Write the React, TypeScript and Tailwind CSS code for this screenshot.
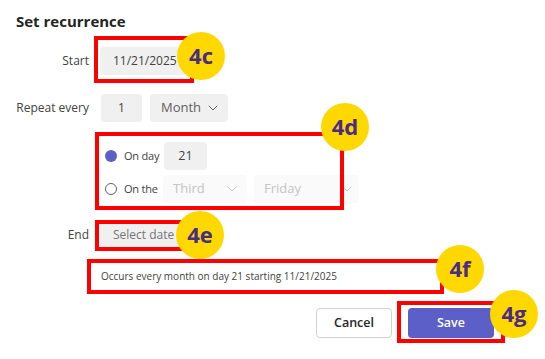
import React from "react"

const font = { fontFamily: '"Open Sans", "Noto Sans", sans-serif' }

function Chevron({ color = "#616161" }: { color?: string }) {
  return (
    <svg width="10" height="6" viewBox="0 0 10 6" fill="none" className="shrink-0">
      <path d="M1 1l4 4 4-4" stroke={color} strokeWidth="1" strokeLinecap="round" strokeLinejoin="round" />
    </svg>
  )
}

function Badge({ label, className }: { label: string; className: string }) {
  return (
    <div
      className={`absolute w-12 h-12 rounded-full bg-[#ffd800] flex items-center justify-center text-[22px] font-bold text-[#4b2c85] leading-none ${className}`}
    >
      <span className="-mt-[2px]">{label}</span>
    </div>
  )
}

export default function App() {
  return (
    <div className="relative w-[545px] h-[359px] bg-white overflow-hidden whitespace-nowrap" style={font}>
      <div className="pl-4 pt-[11px]">
        <h2 className="text-[15px] font-bold leading-5 text-[#242424]">Set recurrence</h2>

        {/* Start */}
        <div className="mt-4 flex items-center h-7">
          <div className="w-[73px] shrink-0 text-right text-[12px] text-[#424242]">Start</div>
          <div className="ml-[11px] h-7 w-[88px] shrink-0 rounded bg-[#f0f0f0] pl-[13px] flex items-center text-[12px] text-[#424242]">
            11/21/2025
          </div>
        </div>

        {/* Repeat every */}
        <div className="mt-[19px] flex items-center h-7">
          <div className="w-[73px] shrink-0 text-right text-[12px] text-[#424242]">Repeat every</div>
          <div className="ml-[12px] h-7 w-[41px] shrink-0 rounded bg-[#f0f0f0] flex items-center justify-center text-[12px] text-[#424242]">
            1
          </div>
          <div className="ml-2 h-7 w-[78px] shrink-0 rounded bg-[#f0f0f0] pl-[11px] pr-[10px] flex items-center justify-between text-[13px] text-[#616161]">
            <span>Month</span>
            <Chevron />
          </div>
        </div>

        {/* On day */}
        <div className="mt-5 flex items-center h-7 pl-[89px]">
          <span className="w-3 h-3 shrink-0 rounded-full bg-[#5b5fc7]" />
          <span className="ml-[7px] w-[40px] shrink-0 text-[11px] tracking-[-0.2px] text-[#424242]">On day</span>
          <div className="h-7 w-[43px] shrink-0 rounded bg-[#f0f0f0] flex items-center justify-center text-[12.5px] text-[#424242]">
            21
          </div>
        </div>

        {/* On the */}
        <div className="mt-[5px] flex items-center h-7 pl-[89px]">
          <span className="w-3 h-3 shrink-0 rounded-full border border-[#616161]" />
          <span className="ml-[7px] w-[39px] shrink-0 text-[11px] tracking-[-0.2px] text-[#424242]">On the</span>
          <div className="h-7 w-[84px] shrink-0 rounded bg-[#fafafa] pl-[10px] pr-[10px] flex items-center justify-between text-[13px] text-[#c4c4c4]">
            <span>Third</span>
            <Chevron color="#c4c4c4" />
          </div>
          <div className="ml-[7px] h-7 w-[105px] shrink-0 rounded bg-[#fafafa] pl-[10px] pr-[7px] flex items-center justify-between text-[13px] text-[#c4c4c4]">
            <span>Friday</span>
            <Chevron color="#c4c4c4" />
          </div>
        </div>

        {/* End */}
        <div className="mt-[18px] flex items-center h-7">
          <div className="w-[73px] shrink-0 text-right text-[12px] text-[#424242]">End</div>
          <div className="ml-[11px] h-7 w-[90px] shrink-0 rounded bg-[#f0f0f0] pl-[13px] flex items-center text-[12px] text-[#757575]">
            Select date
          </div>
        </div>

        {/* Summary */}
        <div className="mt-[19px] ml-[85px] text-[10px] leading-4 text-[#424242]">
          Occurs every month on day 21 starting 11/21/2025
        </div>

        {/* Buttons */}
        <div className="mt-6 ml-[300px] flex gap-4">
          <button className="h-[30px] w-[76px] shrink-0 rounded border border-[#d1d1d1] bg-white text-[12.5px] font-semibold text-[#242424]">
            Cancel
          </button>
          <button className="h-[30px] w-[86px] shrink-0 rounded bg-[#5b5fc7] text-[12.5px] font-semibold text-white">
            Save
          </button>
        </div>
      </div>

      {/* Annotations */}
      <div className="absolute left-[94px] top-[36px] w-[100px] h-[47px] border-4 border-[#ff0000]" />
      <div className="absolute left-[95px] top-[132px] w-[249px] h-[78px] border-4 border-[#ff0000]" />
      <div className="absolute left-[95px] top-[220px] w-[100px] h-[31px] border-4 border-[#ff0000]" />
      <div className="absolute left-[87px] top-[259px] w-[357px] h-[35px] border-4 border-[#ff0000]" />
      <div className="absolute left-[397px] top-[301px] w-[108px] h-[42px] border-4 border-[#ff0000]" />

      <Badge label="4c" className="left-[177px] top-[32px]" />
      <Badge label="4d" className="left-[321px] top-[103px]" />
      <Badge label="4e" className="left-[176px] top-[211px]" />
      <Badge label="4f" className="left-[436px] top-[245px]" />
      <Badge label="4g" className="left-[490px] top-[290px]" />
    </div>
  )
}
